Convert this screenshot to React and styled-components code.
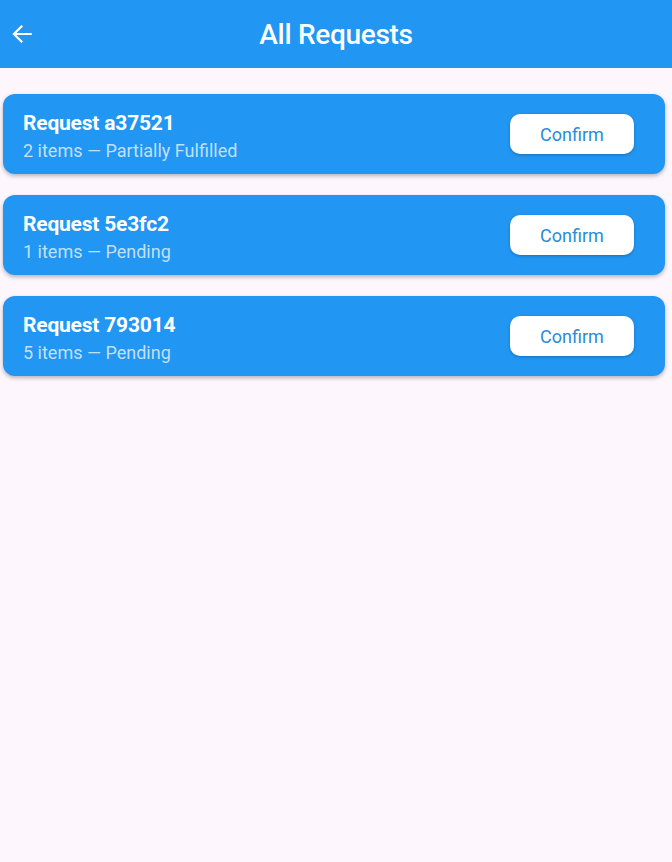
import styled, { createGlobalStyle } from 'styled-components';

const GlobalStyle = createGlobalStyle`
  html, body {
    margin: 0;
    padding: 0;
    background: #fdf6fd;
    font-family: Roboto, "Noto Sans", sans-serif;
  }
`;

const requests = [
  { id: 'a37521', items: 2, status: 'Partially Fulfilled' },
  { id: '5e3fc2', items: 1, status: 'Pending' },
  { id: '793014', items: 5, status: 'Pending' }
];

const App = () => {
  return (
    <>
      <GlobalStyle />
      <Page>
        <AppBar>
          <BackBtn aria-label="back">
            <svg width="26" height="26" viewBox="0 0 24 24" fill="none">
              <path
                d="M20 12H5M11.5 5L4.5 12l7 7"
                stroke="#fff"
                strokeWidth="2"
                strokeLinecap="square"
              />
            </svg>
          </BackBtn>
          <Title>All Requests</Title>
        </AppBar>

        <List>
          {requests.map((req) => (
            <Card key={req.id}>
              <Info>
                <CardTitle>Request {req.id}</CardTitle>
                <CardSub>
                  {req.items} items — {req.status}
                </CardSub>
              </Info>
              <ConfirmBtn>Confirm</ConfirmBtn>
            </Card>
          ))}
        </List>
      </Page>
    </>
  );
};

export default App;

const Page = styled.div`
  min-height: 862px;
  background: #fdf6fd;
`;

const AppBar = styled.header`
  position: relative;
  height: 68px;
  background: #2196f3;
  display: flex;
  align-items: center;
  justify-content: center;
`;

const BackBtn = styled.button`
  position: absolute;
  left: 9px;
  top: 21px;
  padding: 0;
  border: none;
  background: none;
  display: flex;
`;

const Title = styled.h1`
  margin: 0;
  color: #fff;
  font-size: 28px;
  font-weight: 500;
  letter-spacing: -0.3px;
`;

const List = styled.div`
  display: flex;
  flex-direction: column;
  gap: 21px;
  padding: 26px 7px 0 3px;
`;

const Card = styled.div`
  height: 80px;
  box-sizing: border-box;
  background: #2196f3;
  border-radius: 12px;
  box-shadow: 0 2px 4px rgba(0, 0, 0, 0.28);
  display: flex;
  align-items: center;
  justify-content: space-between;
  padding: 4px 31px 0 20px;
`;

const Info = styled.div`
  display: flex;
  flex-direction: column;
  gap: 5px;
`;

const CardTitle = styled.div`
  color: #fff;
  font-size: 21px;
  line-height: 24px;
  font-weight: 700;
  letter-spacing: -0.2px;
`;

const CardSub = styled.div`
  color: rgba(255, 255, 255, 0.72);
  font-size: 18px;
  line-height: 22px;
  font-weight: 400;
`;

const ConfirmBtn = styled.button`
  width: 124px;
  height: 40px;
  margin-top: -4px;
  border: none;
  border-radius: 10px;
  background: #fff;
  color: #2a8bd8;
  font-family: Roboto, sans-serif;
  font-size: 18px;
  font-weight: 400;
  box-shadow: 0 1px 3px rgba(0, 0, 0, 0.25);
`;
